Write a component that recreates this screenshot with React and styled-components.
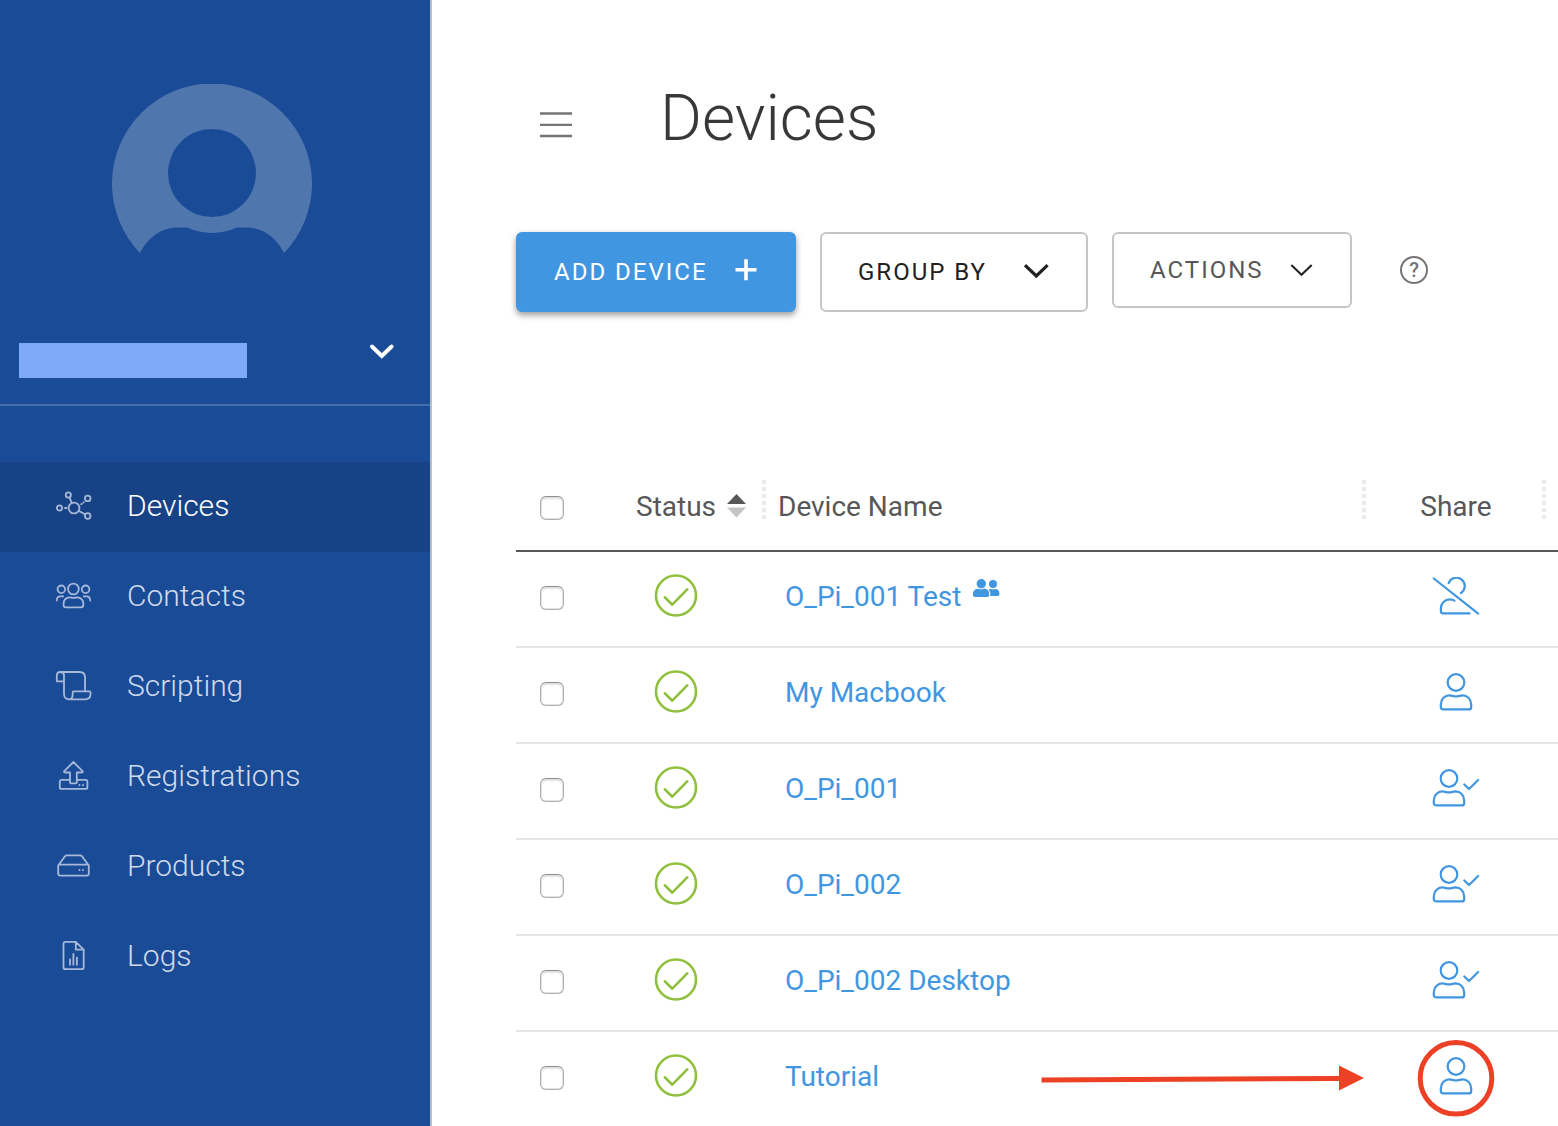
import React from 'react';
import styled, { createGlobalStyle } from 'styled-components';

const GlobalStyle = createGlobalStyle`
  *, *::before, *::after { box-sizing: border-box; }
  body {
    margin: 0;
    background: #fff;
    color: #575757;
    font-family: Roboto, "Noto Sans", sans-serif;
  }
  button { font: inherit; }
`;

const Shell = styled.div`
  display: flex;
  min-height: 100vh;
`;

const Sidebar = styled.aside`
  flex: 0 0 432px;
  background: #1a4b96;
  border-right: 2px solid #bdbdbd;
`;

const Profile = styled.div`
  display: flex;
  padding: 84px 118px 0 112px;
`;

const AccountButton = styled.button`
  display: flex;
  width: 100%;
  align-items: flex-start;
  justify-content: space-between;
  padding: 59px 35px 26px 19px;
  border: 0;
  border-bottom: 2px solid #466ead;
  background: none;
  color: #fff;
  cursor: pointer;
`;

const AccountName = styled.span`
  width: 228px;
  height: 35px;
  background: #7ea8f8;
`;

const NavList = styled.ul`
  margin: 0;
  padding: 56px 0 0;
  list-style: none;
`;

const NavLink = styled.a`
  display: flex;
  align-items: center;
  gap: 35px;
  height: 90px;
  padding: 0 56px 2px;
  background: ${(p) => (p.$active ? '#174286' : 'transparent')};
  color: ${(p) => (p.$active ? '#fff' : '#cfdaeb')};
  font-size: 30px;
  font-weight: 300;
  line-height: 36px;
  text-decoration: none;
`;

const NavIcon = styled.svg`
  flex: none;
  width: 36px;
  height: 36px;
  overflow: visible;
  fill: none;
  stroke: #a6b9d9;
  stroke-width: 1.8;
  stroke-linecap: round;
  stroke-linejoin: round;
`;

const Main = styled.main`
  flex: 1;
  min-width: 0;
  padding: 80px 0 0 84px;
`;

const PageHeader = styled.header`
  display: flex;
  align-items: center;
  gap: 76px;
  padding: 0 24px;
`;

const MenuButton = styled.button`
  display: flex;
  padding: 12px 0 0;
  border: 0;
  background: none;
  color: #757575;
  cursor: pointer;
`;

const Title = styled.h1`
  margin: 0;
  padding-left: 12px;
  color: #383838;
  font-size: 64px;
  font-weight: 300;
  line-height: 78px;
`;

const Toolbar = styled.div`
  display: flex;
  align-items: flex-start;
  gap: 24px;
  padding-top: 74px;
`;

const ToolButton = styled.button`
  display: flex;
  align-items: center;
  justify-content: space-between;
  width: ${(p) => p.$width}px;
  height: ${(p) => (p.$compact ? 76 : 80)}px;
  padding: 0 36px;
  border: 2px solid ${(p) => (p.$primary ? '#4196e2' : '#c5c5c5')};
  border-radius: 6px;
  background: ${(p) => (p.$primary ? '#4196e2' : '#fff')};
  box-shadow: ${(p) => (p.$primary ? '0 3px 6px rgba(0, 0, 0, 0.4)' : 'none')};
  color: ${(p) => (p.$primary ? '#fff' : p.$compact ? '#575757' : '#212121')};
  font-size: 24px;
  letter-spacing: 2px;
  line-height: 28px;
  text-transform: uppercase;
  white-space: nowrap;
  cursor: pointer;
`;

const HelpButton = styled.button`
  display: flex;
  align-items: center;
  justify-content: center;
  width: 76px;
  height: 76px;
  padding: 0;
  border: 0;
  background: none;
  cursor: pointer;
`;

const HelpMark = styled.span`
  width: 28px;
  height: 28px;
  border: 2px solid #757575;
  border-radius: 50%;
  color: #757575;
  font-size: 20px;
  font-weight: 500;
  line-height: 24px;
`;

const Table = styled.table`
  width: 100%;
  margin-top: 150px;
  border-spacing: 0;
  table-layout: fixed;
  font-size: 28px;
  line-height: 36px;
`;

const Col = styled.col`
  width: ${(p) => (p.$width ? `${p.$width}px` : 'auto')};
`;

const HeadCell = styled.th`
  height: 90px;
  padding: 2px 0 0 ${(p) => p.$indent || 0}px;
  border-bottom: 2px solid #575757;
  background: ${(p) =>
    p.$divided
      ? 'repeating-linear-gradient(#ebebeb 0 4px, transparent 4px 7px) right 18px / 4px 40px no-repeat'
      : 'none'};
  font-weight: 400;
  text-align: ${(p) => p.$align || 'left'};
`;

const SortButton = styled.button`
  display: flex;
  align-items: center;
  gap: 11px;
  padding: 0;
  border: 0;
  background: none;
  color: inherit;
  cursor: pointer;
`;

const Cell = styled.td`
  height: 96px;
  padding: 0 0 4px ${(p) => p.$indent || 0}px;
  border-bottom: 2px solid #e6e6e6;
  text-align: ${(p) => p.$align || 'left'};

  tr:last-child > & {
    height: 94px;
    border-bottom: 0;
  }
`;

const Checkbox = styled.input.attrs({ type: 'checkbox' })`
  appearance: none;
  display: block;
  width: 24px;
  height: 24px;
  margin: 2px 0 0;
  border: 1px solid #adadad;
  border-top-color: #8f8f8f;
  border-radius: 6px;
  background: #fff;
  box-shadow: inset 0 0 0 1px #e3e3e3, inset 0 2px 2px #e0e0e0;

  &:checked { background: #4196e2; }
`;

const DeviceLink = styled.a`
  display: flex;
  align-items: flex-start;
  gap: 12px;
  color: #4196e2;
  line-height: 38px;
  text-decoration: none;
  white-space: nowrap;
`;

const ShareButton = styled.button`
  position: relative;
  display: inline-flex;
  padding: 0;
  border: 0;
  background: none;
  vertical-align: middle;
  cursor: pointer;
`;

const ShareGlyph = styled.svg`
  width: 48px;
  height: 40px;
  fill: none;
  stroke: #4196e2;
  stroke-width: 2.2;
  stroke-linecap: round;
  stroke-linejoin: round;
`;

const StatusGlyph = styled.svg`
  width: 44px;
  height: 44px;
  overflow: visible;
  vertical-align: middle;
  fill: none;
  stroke: #8fc13e;
  stroke-width: 2.6;
  stroke-linecap: round;
  stroke-linejoin: round;
`;

const Callout = styled.svg`
  position: absolute;
  top: -19px;
  right: -16px;
  width: 456px;
  height: 80px;
  overflow: visible;
  pointer-events: none;
`;

const navIcons = {
  devices: (
    <>
      <circle cx="18" cy="19" r="5.4" />
      <circle cx="12.3" cy="6" r="2.6" />
      <circle cx="31.7" cy="9.4" r="2.8" />
      <circle cx="3.5" cy="19" r="2.6" />
      <circle cx="31.7" cy="27" r="2.8" />
      <path d="M13.5 8.6 15.8 13.8M9 19h1.4M25.2 15.2l.4-.3M27.3 13.6l.4-.3M23 22l6 3.3" />
    </>
  ),
  contacts: (
    <>
      <circle cx="17.4" cy="10" r="5.4" />
      <circle cx="5.3" cy="10.3" r="3.8" />
      <circle cx="29.6" cy="10.3" r="3.8" />
      <path d="M7.6 26v-1.5c0-3.4 2.5-6.2 5.8-6.2 1.4 0 2.4.6 4 .6s2.6-.6 4-.6c3.3 0 5.9 2.8 5.9 6.2V26c0 1.4-.8 2.3-2.2 2.3H9.8c-1.4 0-2.2-.9-2.2-2.3ZM.8 21.6c0-2.6 1.5-4.3 3.7-4.3h2.7M34.2 21.6c0-2.6-1.5-4.3-3.7-4.3h-2.7" />
    </>
  ),
  scripting: (
    <path d="M8 12.3H.8V6.7C.8 4.5 2.3 3 4.4 3S8 4.5 8 6.7V25c0 3.2 2 5.3 4.7 5.3h16.5c3.2 0 5.3-2 5.3-5v-2c0-.7-.3-1-1-1H17.7c-.7 0-1 .3-1 1V25.5c0 3-1.5 4.8-4 4.8M4.4 3H23.5C26.8 3 29 5.2 29 8.5v13.5" />
  ),
  registrations: (
    <>
      <path d="M17.4 3 8.2 12.2c-.5.7 0 1.3.8 1.3h5v9.8c0 .6.4 1 1 1h4.8c.6 0 1-.4 1-1v-9.800h5c.8 0 1.3-.6.8-1.300Z" />
      <path d="M14 20.8H5.5c-1 0-1.7.7-1.7 1.7v5.7c0 1 .7 1.7 1.7 1.7h24.2c1 0 1.7-.7 1.7-1.7v-5.7c0-1-.7-1.7-1.7-1.7h-8.900M23.5 26v.3M27 26v.3" />
    </>
  ),
  products: (
    <path d="M2.2 16.500v8c0 1.300.8 2.100 2.100 2.100h26.400c1.300 0 2.100-.8 2.100-2.100v-8L26 7.300c-.4-.6-1-.9-1.700-.9H10.700c-.7 0-1.300.3-1.700.9ZM2.800 15.700h29.400M23.500 20.900v.3M27 20.900v.3" />
  ),
  logs: (
    <path d="M19.800 2.800H9.500c-1.300 0-2 .7-2 2v23.400c0 1.300.7 2 2 2h16.200c1.300 0 2-.7 2-2V10.600ZM19.800 2.800v7.800h7.900M14 20.400v5.400M17.400 15v10.800M20.900 18.600v7.200" />
  ),
};

const shareIcons = {
  none: (
    <path d="M1.800 1.500 46.200 36.600M16.700 6A8.300 8.300 0 1 1 28.900 16M22.400 23.700c-1-.8-2.600-1.300-4.600-1.300-5 0-8.900 4-8.900 9v2.500c0 1.600.9 2.500 2.500 2.500H37.500" />
  ),
  single: (
    <>
      <circle cx="24" cy="9.5" r="8.3" />
      <path d="M8.800 31.400c0-5 3.700-9 8.700-9 2.300 0 3.700 1 6.500 1s4.200-1 6.500-1c5 0 8.700 4 8.700 9v2.500c0 1.600-.9 2.500-2.500 2.500H11.300c-1.600 0-2.500-.9-2.500-2.500Z" />
    </>
  ),
  shared: (
    <>
      <circle cx="17" cy="9.5" r="8.3" />
      <path d="M1.800 31.400c0-5 3.700-9 8.700-9 2.300 0 3.700 1 6.500 1s4.200-1 6.500-1c5 0 8.700 4 8.700 9v2.500c0 1.600-.9 2.500-2.500 2.500H4.300c-1.600 0-2.500-.9-2.500-2.500ZM32.300 15.500l4.700 4.500 9.200-9" />
    </>
  ),
};

const navItems = [
  { label: 'Devices', icon: 'devices', active: true },
  { label: 'Contacts', icon: 'contacts' },
  { label: 'Scripting', icon: 'scripting' },
  { label: 'Registrations', icon: 'registrations' },
  { label: 'Products', icon: 'products' },
  { label: 'Logs', icon: 'logs' },
];

const devices = [
  { name: 'O_Pi_001 Test', share: 'none', group: true },
  { name: 'My Macbook', share: 'single' },
  { name: 'O_Pi_001', share: 'shared' },
  { name: 'O_Pi_002', share: 'shared' },
  { name: 'O_Pi_002 Desktop', share: 'shared' },
  { name: 'Tutorial', share: 'single', highlighted: true },
];

const chevrons = {
  bold: { d: 'M1 2.2 12.3 13 23.600 2.2', width: 3.2 },
  thin: { d: 'M3.300 4 13.500 13.800 23.700 4', width: 2 },
};

function Chevron({ kind }) {
  const { d, width } = chevrons[kind];
  return (
    <svg width="26" height="18" viewBox="0 0 26 18" fill="none" stroke="#212121" strokeWidth={width} aria-hidden="true">
      <path d={d} />
    </svg>
  );
}

function GroupBadge() {
  return (
    <svg width="28" height="20" viewBox="0 0 28 20" fill="#4196e2" aria-hidden="true">
      <circle cx="8.3" cy="5.7" r="4.7" />
      <circle cx="20" cy="6" r="4" />
      <path d="M0 17V16c0-3 2.2-5.2 5-5.2 1.2 0 2 .6 3.2.6s2-.6 3.2-.6c2.8 0 4.8 2.2 4.8 5.2v1c0 1.2-.7 1.9-1.9 1.9H1.900C.7 18.900 0 18.200 0 17ZM17.200 18c.4-2.600-.2-4.600-1.500-6.300.6-.4 1.200-.6 2-.6.9 0 1.300.4 2.300.4s1.500-.4 2.400-.4c2.300 0 4 1.800 4 4.200v.9c0 1.100-.7 1.800-1.800 1.800Z" />
    </svg>
  );
}

function HighlightCallout() {
  return (
    <Callout viewBox="0 0 456 80" aria-hidden="true">
      <path d="M1.500 42 300 40.500" stroke="#ec4125" strokeWidth="5" />
      <path d="M299 27.500 324 40 299 52.500Z" fill="#ec4125" />
      <circle cx="416" cy="40.300" r="35.800" fill="none" stroke="#ec4125" strokeWidth="5" />
    </Callout>
  );
}

export default function App() {
  return (
    <Shell>
      <GlobalStyle />
      <Sidebar>
        <Profile>
          <svg width="200" height="200" viewBox="0 0 200 200" role="img" aria-label="Profile picture">
            <path
              fill="#5076ae"
              fillRule="evenodd"
              d="M28 169A100 100 0 1 1 172 169C164 153 150 143.5 134 143.5H125A60 60 0 0 1 75 143.5H66C50 143.5 36 153 28 169ZM100 45a44 44 0 1 0 0 88a44 44 0 0 0 0-88Z"
            />
          </svg>
        </Profile>
        <AccountButton type="button" aria-label="Account menu">
          <AccountName />
          <svg width="26" height="18" viewBox="0 0 26 18" fill="none" stroke="currentColor" strokeWidth="4" strokeLinecap="round" aria-hidden="true">
            <path d="M3 3.5 12.8 13 22.6 3.5" />
          </svg>
        </AccountButton>
        <nav aria-label="Main">
          <NavList>
            {navItems.map((item) => (
              <li key={item.label}>
                <NavLink href={`#${item.icon}`} $active={item.active} aria-current={item.active ? 'page' : undefined}>
                  <NavIcon viewBox="0 -1 36 36" aria-hidden="true">{navIcons[item.icon]}</NavIcon>
                  {item.label}
                </NavLink>
              </li>
            ))}
          </NavList>
        </nav>
      </Sidebar>

      <Main>
        <PageHeader>
          <MenuButton type="button" aria-label="Toggle menu">
            <svg width="32" height="26" viewBox="0 0 32 26" stroke="currentColor" strokeWidth="2.3" aria-hidden="true">
              <path d="M0 1.5h32M0 12.8h32M0 24h32" />
            </svg>
          </MenuButton>
          <Title>Devices</Title>
        </PageHeader>

        <Toolbar>
          <ToolButton type="button" $primary $width={280}>
            Add device
            <svg width="24" height="28" viewBox="0 0 24 28" stroke="currentColor" strokeWidth="3.6" aria-hidden="true">
              <path d="M1.500 11.800h21M12 1.300v21" />
            </svg>
          </ToolButton>
          <ToolButton type="button" $width={268}>
            Group by
            <Chevron kind="bold" />
          </ToolButton>
          <ToolButton type="button" $compact $width={240}>
            Actions
            <Chevron kind="thin" />
          </ToolButton>
          <HelpButton type="button" aria-label="Help">
            <HelpMark>?</HelpMark>
          </HelpButton>
        </Toolbar>

        <Table>
          <colgroup>
            <Col $width={70} />
            <Col $width={180} />
            <Col />
            <Col $width={180} />
            <Col $width={12} />
          </colgroup>
          <thead>
            <tr>
              <HeadCell $indent={24}>
                <Checkbox aria-label="Select all devices" />
              </HeadCell>
              <HeadCell $indent={50} $divided aria-sort="ascending">
                <SortButton type="button">
                  Status
                  <svg width="20" height="26" viewBox="0 0 20 26" aria-hidden="true">
                    <path d="M0 10 9.500 0 19 10Z" fill="#575757" />
                    <path d="M0 13.500h19L9.500 23.500Z" fill="#c5c5c5" />
                  </svg>
                </SortButton>
              </HeadCell>
              <HeadCell $indent={12} $divided>Device Name</HeadCell>
              <HeadCell $align="center" $divided>Share</HeadCell>
              <HeadCell aria-hidden="true" />
            </tr>
          </thead>
          <tbody>
            {devices.map((device) => (
              <tr key={device.name}>
                <Cell $indent={24}>
                  <Checkbox aria-label={`Select ${device.name}`} />
                </Cell>
                <Cell $align="center">
                  <StatusGlyph viewBox="0 0 44 44" role="img" aria-label="Online">
                    <circle cx="22" cy="20.5" r="20" />
                    <path d="M10.8 22.3 18.3 29.7 33.2 14.3" />
                  </StatusGlyph>
                </Cell>
                <Cell $indent={19}>
                  <DeviceLink href={`#${device.name}`}>
                    {device.name}
                    {device.group && <GroupBadge />}
                  </DeviceLink>
                </Cell>
                <Cell $align="center">
                  <ShareButton type="button" aria-label={`Share ${device.name}`}>
                    <ShareGlyph viewBox="0 0 48 40" aria-hidden="true">{shareIcons[device.share]}</ShareGlyph>
                    {device.highlighted && <HighlightCallout />}
                  </ShareButton>
                </Cell>
                <Cell />
              </tr>
            ))}
          </tbody>
        </Table>
      </Main>
    </Shell>
  );
}
